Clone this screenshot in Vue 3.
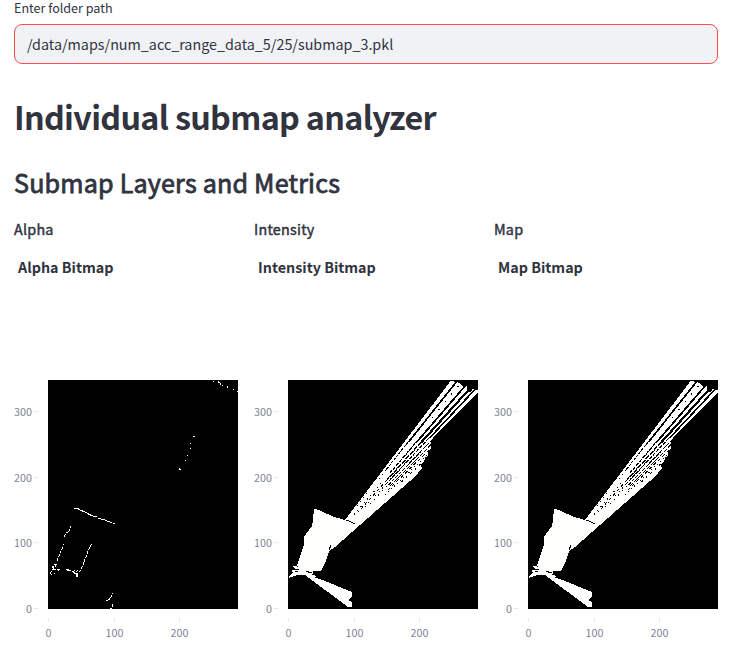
<script setup>
import { ref } from 'vue'

const path = ref('/data/maps/num_acc_range_data_5/25/submap_3.pkl')
const layers = [
  { name: 'Alpha', kind: 'edges' },
  { name: 'Intensity', kind: 'filled' },
  { name: 'Map', kind: 'filled' }
]
const yTicks = [
  { v: 300, y: 31.5 },
  { v: 200, y: 97.5 },
  { v: 100, y: 162.5 },
  { v: 0, y: 228.5 }
]
const xTicks = [
  { v: 0, x: 34.5 },
  { v: 100, x: 100.5 },
  { v: 200, x: 165.5 }
]
// Single occupied cells: x, y, width, height
const cells = [
  [165, 1, 1, 1], [170, 1, 1, 2], [171, 2, 1, 1], [172, 3, 1, 2], [174, 5, 1, 1],
  [179, 6, 1, 2], [185, 9, 1, 1], [189, 11, 1, 1],
  [145, 56, 2, 1], [142, 63, 1, 1], [142, 68, 1, 1], [139, 75, 1, 1], [137, 80, 1, 1],
  [131, 88, 1, 2], [132, 89, 1, 1],
  [15, 164, 1, 1], [6, 184, 3, 1], [7, 185, 1, 2], [4, 186, 2, 2], [4, 189, 4, 1], [9, 189, 3, 1],
  [5, 188, 1, 2], [10, 190, 1, 1], [2, 192, 1, 2], [3, 191, 1, 1], [6, 193, 1, 1], [3, 194, 1, 1],
  [26, 190, 1, 1], [29, 190, 1, 1], [28, 191, 1, 1], [27, 193, 3, 1], [28, 194, 2, 3],
  [64, 213, 1, 1], [63, 215, 1, 2], [62, 217, 1, 1], [61, 218, 1, 2], [58, 220, 2, 1], [60, 219, 1, 1],
  [64, 224, 1, 3], [62, 228, 2, 1]
]

// Unseen cells between scan rays. Every ray leaves the sensor at (21, 187):
// slope (dx per dy), top row, bottom row, thickness, dash pattern
const rays = [
  [0.796, 0, 62, 1.7, ''],
  [0.793, 62, 90, 1, '3 1'],
  [0.79, 90, 128, 1, '1 4'],
  [0.825, 6, 50, 1, '1 9'],
  [0.862, 2, 60, 1.8, ''],
  [0.86, 60, 92, 1.3, '4 1'],
  [0.86, 92, 136, 1, '1 4'],
  [0.901, 4, 62, 2.2, ''],
  [0.898, 62, 100, 1.4, '5 1'],
  [0.895, 100, 132, 1, '3 3'],
  [0.935, 6, 58, 1.6, ''],
  [0.93, 58, 104, 1.2, '4 1'],
  [0.93, 104, 128, 1, '1 4'],
  [0.968, 52, 106, 1, '4 1'],
  [0.965, 106, 126, 1, '1 5'],
  [0.998, 60, 106, 1, '5 1'],
  [1.026, 66, 110, 1, '3 3'],
  [1.056, 70, 116, 1, '1 3'],
  [1.085, 76, 104, 1, '2 4']
].map(([k, y1, y2, w, dash]) => ({
  d: `M${(21 + k * (187 - y1)).toFixed(1)} ${y1}L${(21 + k * (187 - y2)).toFixed(1)} ${y2}`,
  w,
  dash: dash || null
}))
</script>

<template>
  <main class="page">
    <label class="label" for="folder">Enter folder path</label>
    <input id="folder" v-model="path" class="field" type="text" spellcheck="false" />
    <h1>Individual submap analyzer</h1>
    <h2>Submap Layers and Metrics</h2>
    <div class="columns">
      <section v-for="layer in layers" :key="layer.name">
        <p class="name">{{ layer.name }}</p>
        <p class="title">{{ layer.name }} Bitmap</p>
        <svg class="chart" width="224" height="270" viewBox="0 0 224 270">
          <g class="ticks">
            <g v-for="t in yTicks" :key="'y' + t.v">
              <path :d="`M20 ${t.y}h5`" />
              <text x="18" :y="t.y + 4.2" text-anchor="end">{{ t.v }}</text>
            </g>
            <g v-for="t in xTicks" :key="'x' + t.v">
              <path :d="`M${t.x} 238v5`" />
              <text :x="t.x" y="257" text-anchor="middle">{{ t.v }}</text>
            </g>
          </g>
          <svg x="34" y="0" width="190" height="229" viewBox="0 0 190 229" shape-rendering="crispEdges">
            <rect width="190" height="229" fill="#000" />
            <g v-if="layer.kind === 'edges'">
              <rect v-for="(c, i) in cells" :key="i" :x="c[0]" :y="c[1]" :width="c[2]" :height="c[3]" fill="#fff" />
              <g class="wall">
                <path d="M26 128.500h5M30 129.500h2M32 130.500h3M34 131.500h3M37 132.500h2M39 133.500h2M40 134.500h3M42 135.500h3M45 136.500h4M50 138.500h3M53 139.500h4M57 140.500h2M59 141.500h3M62 142.500h2M65 143.500h2" />
                <path d="M22.500 146v2M21.500 149v2M20 151.500h1M18 152.500h2M17.500 154v1M16.500 155v2" />
                <path d="M15 167l-3 6-3 8" stroke-dasharray="3 1" />
                <path d="M43.500 164l-3 6-3 8-3 8-3 6" stroke-dasharray="3 1" />
                <path d="M18 189.500h3M19 190.500h4M24 191.500h2M25 192.500h2M26 193.500h2" />
              </g>
            </g>
            <g v-else>
              <g class="free">
                <path d="M57 140L163 0.500h3l1 3 1-3 6 5 2 4 2-5 1 4 3 4 3-4 2 2 3-1v3L145 58l-2 3v7l-3 4v4l-3 1v4l-4 3 1 5-3 2-1 3L72 145 57 142z" />
                <path
                  d="M26 129h2l5 2 12 5.500 12 3.500 15 3v2L47 167l-6 4-3 10-5 10-6 1-5 1 5 1 1 3h-3l12 4 27 11v5l-4 3 4 2v5h-4L17 195l-8 0-8 3v-2l3-2v-4l3-1-2-3h4l1-3 6-18v-9l2-2 6-8 1-6z"
                />
              </g>
              <g class="gap">
                <path v-for="(r, i) in rays" :key="i" :d="r.d" :stroke-width="r.w" :stroke-dasharray="r.dash" />
                <path
                  d="M58 140.500h3M61 141.500h2M63 142.500h2M65 143.500h2M42.500 165v3M41.500 167v3M5 189.500h6M7 191.500h3M4 192.500h1M18 191.500h3M20 192.500h4M25 191.500h5M24 194.500h3M9 186.500h1"
                />
              </g>
            </g>
          </svg>
        </svg>
      </section>
    </div>
  </main>
</template>

<style>
body {
  background: #fff;
}
</style>

<style scoped>
.page {
  box-sizing: border-box;
  width: 730px;
  height: 663px;
  padding: 0 12px 0 14px;
  color: #31333f;
  font-family: 'Noto Sans CJK SC', 'Noto Sans', sans-serif;
}
.label {
  display: block;
  height: 24px;
  font-size: 12.550px;
  line-height: 15px;
}
.field {
  display: block;
  box-sizing: border-box;
  width: 704px;
  height: 40px;
  padding: 0 12px 2px;
  border: 1px solid #ff4b4b;
  border-radius: 8px;
  outline: none;
  background: #f0f2f6;
  color: inherit;
  font: 14.330px 'Noto Sans CJK SC', sans-serif;
}
h1,
h2,
p {
  margin: 0;
}
h1 {
  margin-top: 30px;
  font-size: 32.300px;
  font-weight: 700;
  line-height: 44px;
  letter-spacing: -0.680px;
}
h2 {
  margin-top: 28px;
  font-size: 25.100px;
  font-weight: 400;
  line-height: 32px;
  letter-spacing: 0.200px;
  -webkit-text-stroke: 0.800px #31333f;
}
.columns {
  display: grid;
  grid-template-columns: repeat(3, 224px);
  column-gap: 16px;
  margin-top: 19px;
}
.name {
  font-size: 14.330px;
  font-weight: 400;
  line-height: 24px;
  letter-spacing: 0.240px;
  -webkit-text-stroke: 0.450px #31333f;
}
.title {
  margin-top: 14px;
  padding-left: 4px;
  font-size: 14.330px;
  font-weight: 700;
  line-height: 24px;
}
.chart {
  display: block;
  margin-top: 101px;
}
.ticks text {
  fill: #808495;
  font-size: 10.750px;
}
.ticks path {
  fill: none;
  stroke: #e6eaf1;
}
.wall path {
  fill: none;
  stroke: #fff;
}
.free path {
  fill: #fffffd;
}
.gap path {
  fill: none;
  stroke: #000;
}
</style>
